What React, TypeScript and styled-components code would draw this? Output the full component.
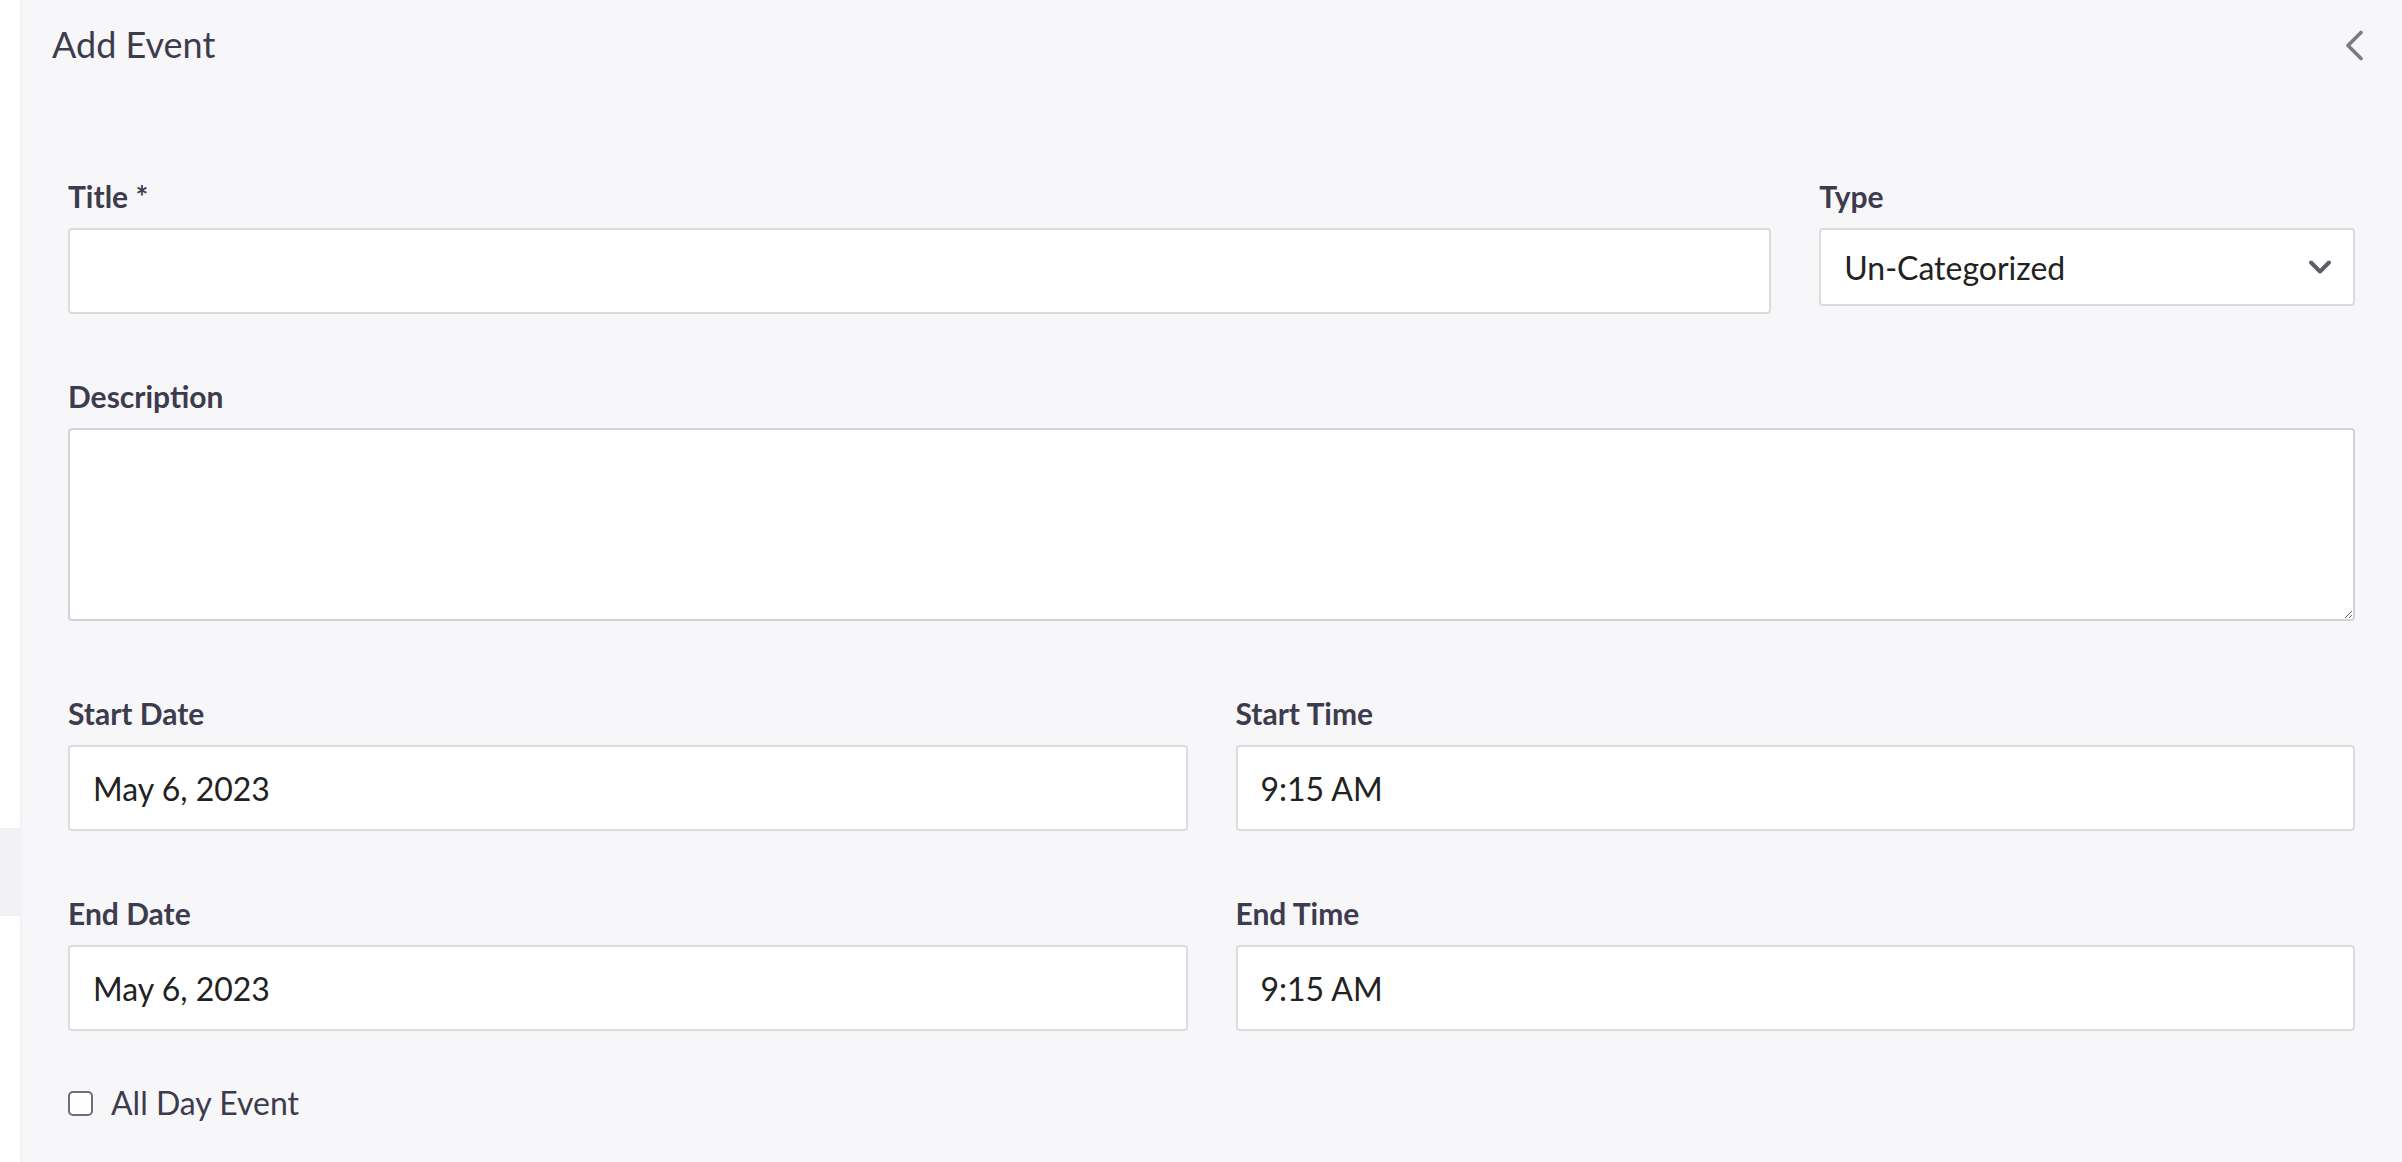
import React from "react";
import styled, { createGlobalStyle } from "styled-components";

const GlobalStyle = createGlobalStyle`
  html, body {
    margin: 0;
    padding: 0;
    background: #ffffff;
    font-family: Lato, "Open Sans", Arial, sans-serif;
  }
  * { box-sizing: border-box; }
`;

const Page = styled.div`
  display: flex;
  min-height: 100vh;
`;

const Rail = styled.aside`
  width: 20px;
  flex: 0 0 20px;
  background: #ffffff;
  padding-top: 828px;
`;

const RailItem = styled.div`
  height: 88px;
  background: #f1f1f6;
`;

const Panel = styled.main`
  flex: 1;
  background: #f7f7f9;
  box-shadow: inset 2px 0 3px -1px rgba(0, 0, 0, 0.04);
  min-height: 100vh;
`;

const Header = styled.header`
  height: 88px;
  display: flex;
  align-items: center;
  justify-content: space-between;
  padding: 2px 38px 0 32px;
`;

const Heading = styled.h2`
  margin: 0;
  font-size: 36px;
  font-weight: 400;
  line-height: 1.2;
  color: #3d3c4f;
`;

const CollapseButton = styled.button`
  display: flex;
  align-items: center;
  justify-content: center;
  padding: 0;
  border: 0;
  background: transparent;
  color: #7a7a86;
  cursor: pointer;
`;

const Form = styled.form`
  padding: 86px 47px 0 48px;
`;

const Row = styled.div`
  display: flex;
  margin: 0 -24px;
`;

const Col = styled.div<{ $span: number }>`
  flex: 0 0 ${(p) => (p.$span / 12) * 100}%;
  max-width: ${(p) => (p.$span / 12) * 100}%;
  padding: 0 24px;
`;

const FormGroup = styled.div<{ $mb?: number }>`
  display: flow-root;
  margin-bottom: ${(p) => p.$mb ?? 60}px;
`;

const Label = styled.label`
  display: block;
  font-size: 30px;
  font-weight: 700;
  line-height: 45px;
  margin-bottom: 9px;
  color: #3d3c4f;
`;

const Input = styled.input`
  display: block;
  width: 100%;
  height: 86px;
  padding: 0 23px;
  border: 2px solid #dcdcdf;
  border-radius: 4px;
  background: #ffffff;
  font-family: inherit;
  font-size: 32px;
  color: #222222;
  outline: none;
`;

const SelectWrap = styled.div`
  position: relative;
`;

const Select = styled.select`
  display: block;
  width: 100%;
  height: 78px;
  padding: 0 70px 0 23px;
  border: 2px solid #dcdcdf;
  border-radius: 4px;
  background: #ffffff;
  font-family: inherit;
  font-size: 32px;
  color: #222222;
  appearance: none;
  -webkit-appearance: none;
  outline: none;
`;

const SelectArrow = styled.svg`
  position: absolute;
  right: 23px;
  top: 50%;
  transform: translateY(-50%);
  pointer-events: none;
  color: #5e5e6b;
`;

const TextArea = styled.textarea`
  display: block;
  width: 100%;
  height: 193px;
  margin-bottom: 10px;
  padding: 16px 23px;
  border: 2px solid #d2d2d8;
  border-radius: 4px;
  background: #ffffff;
  font-family: inherit;
  font-size: 32px;
  color: #222222;
  outline: none;
`;

const CheckRow = styled.label`
  display: flex;
  align-items: center;
  gap: 18px;
  font-size: 32px;
  line-height: 48px;
  color: #3d3c4f;
  cursor: pointer;
`;

const CheckBox = styled.input`
  appearance: none;
  -webkit-appearance: none;
  width: 25px;
  height: 25px;
  margin: 0;
  border: 2px solid #6e6e76;
  border-radius: 5px;
  background: #ffffff;
  flex: 0 0 auto;
`;

export default function App() {
  return (
    <>
      <GlobalStyle />
      <Page>
        <Rail>
          <RailItem />
        </Rail>
        <Panel>
          <Header>
            <Heading>Add Event</Heading>
            <CollapseButton type="button" aria-label="Collapse">
              <svg width="19" height="31" viewBox="0 0 19 31" fill="none">
                <path
                  d="M16 2.5 L3 15.5 L16 28.5"
                  stroke="currentColor"
                  strokeWidth="3.6"
                  strokeLinecap="round"
                  strokeLinejoin="round"
                />
              </svg>
            </CollapseButton>
          </Header>
          <Form onSubmit={(e) => e.preventDefault()}>
            <Row>
              <Col $span={9}>
                <FormGroup>
                  <Label htmlFor="title">Title *</Label>
                  <Input id="title" type="text" />
                </FormGroup>
              </Col>
              <Col $span={3}>
                <FormGroup>
                  <Label htmlFor="type">Type</Label>
                  <SelectWrap>
                    <Select id="type" defaultValue="Un-Categorized">
                      <option>Un-Categorized</option>
                    </Select>
                    <SelectArrow width="24" height="16" viewBox="0 0 24 16" fill="none">
                      <path
                        d="M3 3.5 L12 12.5 L21 3.5"
                        stroke="currentColor"
                        strokeWidth="4"
                        strokeLinecap="round"
                        strokeLinejoin="round"
                      />
                    </SelectArrow>
                  </SelectWrap>
                </FormGroup>
              </Col>
            </Row>
            <FormGroup>
              <Label htmlFor="description">Description</Label>
              <TextArea id="description" />
            </FormGroup>
            <Row>
              <Col $span={6}>
                <FormGroup>
                  <Label htmlFor="startDate">Start Date</Label>
                  <Input id="startDate" type="text" defaultValue="May 6, 2023" />
                </FormGroup>
              </Col>
              <Col $span={6}>
                <FormGroup>
                  <Label htmlFor="startTime">Start Time</Label>
                  <Input id="startTime" type="text" defaultValue="9:15 AM" />
                </FormGroup>
              </Col>
            </Row>
            <Row>
              <Col $span={6}>
                <FormGroup $mb={48}>
                  <Label htmlFor="endDate">End Date</Label>
                  <Input id="endDate" type="text" defaultValue="May 6, 2023" />
                </FormGroup>
              </Col>
              <Col $span={6}>
                <FormGroup $mb={48}>
                  <Label htmlFor="endTime">End Time</Label>
                  <Input id="endTime" type="text" defaultValue="9:15 AM" />
                </FormGroup>
              </Col>
            </Row>
            <CheckRow>
              <CheckBox type="checkbox" />
              All Day Event
            </CheckRow>
          </Form>
        </Panel>
      </Page>
    </>
  );
}
